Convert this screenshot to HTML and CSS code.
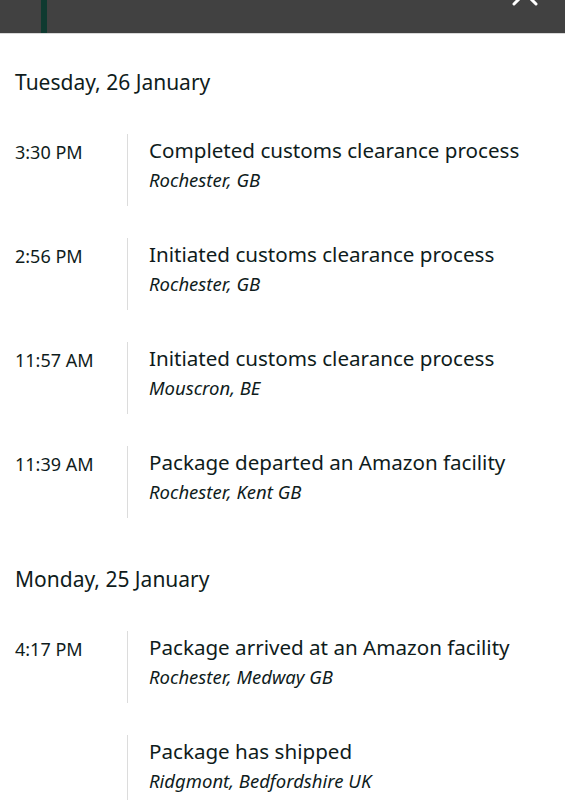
FILE: index.html
```html
<!DOCTYPE html>
<html>
<head>
<meta charset="utf-8">
<link rel="stylesheet" href="styles.css">
</head>
<body>
<header class="topbar">
  <div class="accent"></div>
  <svg class="close" width="30" height="30" viewBox="0 0 30 30" aria-hidden="true">
    <path d="M4 4 L26 26 M26 4 L4 26" stroke="#ffffff" stroke-width="3" stroke-linecap="round" fill="none"/>
  </svg>
</header>
<main class="content">
  <section class="day first">
    <h2 class="day-title">Tuesday, 26 January</h2>
    <div class="event">
      <div class="time">3:30 PM</div>
      <div class="detail">
        <div class="title">Completed customs clearance process</div>
        <div class="place">Rochester, GB</div>
      </div>
    </div>
    <div class="event">
      <div class="time">2:56 PM</div>
      <div class="detail">
        <div class="title">Initiated customs clearance process</div>
        <div class="place">Rochester, GB</div>
      </div>
    </div>
    <div class="event">
      <div class="time">11:57 AM</div>
      <div class="detail">
        <div class="title">Initiated customs clearance process</div>
        <div class="place">Mouscron, BE</div>
      </div>
    </div>
    <div class="event">
      <div class="time">11:39 AM</div>
      <div class="detail">
        <div class="title">Package departed an Amazon facility</div>
        <div class="place">Rochester, Kent GB</div>
      </div>
    </div>
  </section>
  <section class="day">
    <h2 class="day-title">Monday, 25 January</h2>
    <div class="event">
      <div class="time">4:17 PM</div>
      <div class="detail">
        <div class="title">Package arrived at an Amazon facility</div>
        <div class="place">Rochester, Medway GB</div>
      </div>
    </div>
    <div class="event">
      <div class="time"></div>
      <div class="detail">
        <div class="title">Package has shipped</div>
        <div class="place">Ridgmont, Bedfordshire UK</div>
      </div>
    </div>
  </section>
</main>
</body>
</html>
```
FILE: styles.css
```css
html, body {
  margin: 0;
  padding: 0;
  background: #ffffff;
  overflow: hidden;
}
body {
  font-family: "Noto Sans", "Liberation Sans", sans-serif;
  color: #0f1c1c;
  width: 565px;
  height: 800px;
}
.topbar {
  position: relative;
  height: 33px;
  background: #414141;
  border-bottom: 1px solid #d8d8d8;
  overflow: hidden;
}
.accent {
  margin-left: 41px;
  width: 6px;
  height: 33px;
  background: #0f3a30;
}
.close {
  position: absolute;
  left: 510px;
  top: -22px;
}
.content {
  padding: 0 0 0 15px;
}
.day {
  padding-top: 14px;
}
.day.first {
  padding-top: 33px;
}
.day-title {
  margin: 0 0 37px 0;
  font-size: 21px;
  font-weight: 400;
  line-height: 30px;
  height: 30px;
}
.event {
  display: flex;
  height: 72px;
  margin-bottom: 32px;
}
.time {
  width: 112px;
  flex: none;
  font-size: 18px;
  line-height: 24px;
  padding-top: 6px;
}
.detail {
  border-left: 1px solid #dcdcdc;
  padding-left: 21px;
  padding-top: 2px;
}
.title {
  font-size: 20.6px;
  line-height: 28px;
}
.place {
  font-size: 18.5px;
  font-style: italic;
  line-height: 26px;
  margin-top: 3px;
}
```
